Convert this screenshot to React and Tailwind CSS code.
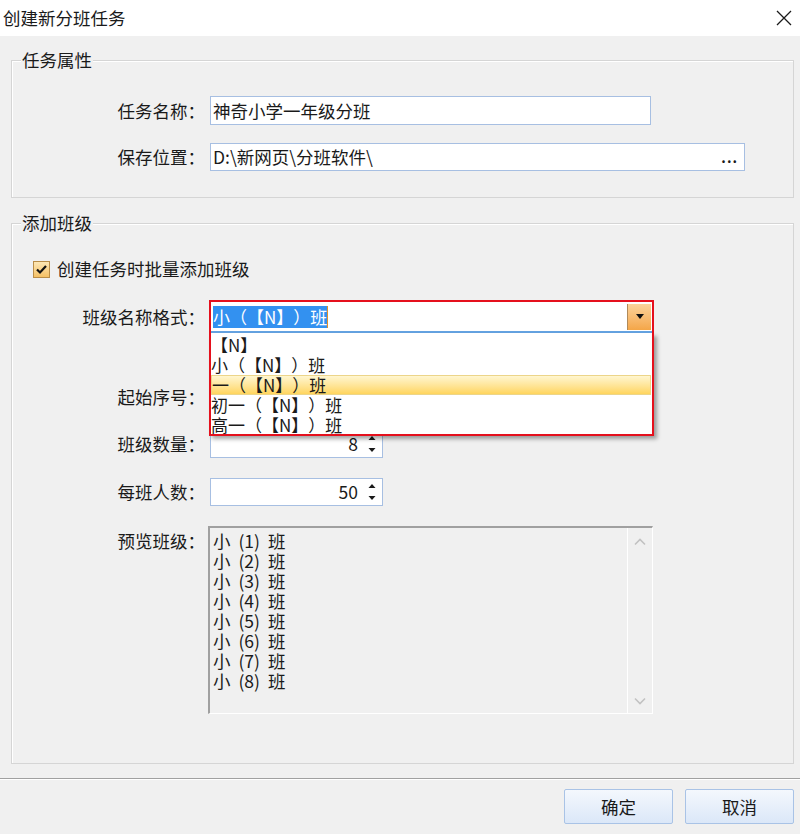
import React from "react";

const FONT = "font-['Noto_Sans_CJK_SC','Microsoft_YaHei',sans-serif]";

const Label = ({ children, className = "" }) => (
  <div className={`w-[193px] shrink-0 text-right leading-[20px] ${className}`}>{children}</div>
);

const TextBox = ({ value, width, height = "h-[28px]", children }) => (
  <div className={`${width} ${height} ml-[5px] flex items-center border border-[#a7bfe2] bg-white pl-[2px]`}>
    <span className="flex-1 leading-[20px] whitespace-nowrap">{value}</span>
    {children}
  </div>
);

const SpinBox = ({ value }) => (
  <div className="w-[173px] h-[28px] ml-[5px] flex items-center justify-end border border-[#a7bfe2] bg-white">
    <span className="leading-[20px]">{value}</span>
    <svg width="8" height="18" viewBox="0 0 8 18" className="ml-[10px] mr-[6px]">
      <path d="M0.5 5 L4 1 L7.5 5 Z" fill="#1a1a1a" />
      <path d="M0.5 13 L4 17 L7.5 13 Z" fill="#1a1a1a" />
    </svg>
  </div>
);

const Group = ({ title, className = "", children }) => (
  <fieldset
    className={`ml-[11px] w-[783px] border border-[#d5d5d5] shadow-[inset_1px_1px_0_#ffffff] ${className}`}
  >
    <legend className="ml-[9px] px-[1px] leading-[20px] bg-[#f0f0f0]">{title}</legend>
    {children}
  </fieldset>
);

const formats = ["【N】", "小（【N】）班", "一（【N】）班", "初一（【N】）班", "高一（【N】）班"];

export default function App() {
  return (
    <div
      className={`w-[800px] h-[834px] bg-[#f0f0f0] text-[17.5px] text-[#1a1a1a] flex flex-col overflow-hidden [text-spacing-trim:space-all] ${FONT}`}
    >
      {/* title bar */}
      <div className="h-[36px] bg-white flex items-center justify-between shrink-0">
        <span className="ml-[3px] leading-[20px]">创建新分班任务</span>
        <svg width="16" height="16" viewBox="0 0 16 16" className="mr-[8px]">
          <path d="M1 1 L15 15 M15 1 L1 15" stroke="#1a1a1a" strokeWidth="1.3" />
        </svg>
      </div>

      <Group title="任务属性" className="mt-[14px] pb-[26px]">
        <div className="flex items-center mt-[26px]">
          <Label>任务名称：</Label>
          <TextBox value="神奇小学一年级分班" width="w-[441px]" height="h-[29px]" />
        </div>
        <div className="flex items-center mt-[18px]">
          <Label>保存位置：</Label>
          <TextBox value="D:\新网页\分班软件\" width="w-[535px]">
            <span className="mr-[6px] font-bold leading-[20px] text-[14px] tracking-[1px]">...</span>
          </TextBox>
        </div>
      </Group>

      <Group title="添加班级" className="mt-[15px] pb-[49px]">
        <div className="flex items-center mt-[26px] ml-[21px] h-[20px]">
          <div className="w-[17px] h-[17px] border border-[#b98d48] bg-gradient-to-b from-[#fde7b4] to-[#f4c064] flex items-center justify-center">
            <svg width="13" height="13" viewBox="0 0 13 13">
              <path d="M2 6.5 L5 9.5 L11 3" stroke="#111" strokeWidth="2.2" fill="none" />
            </svg>
          </div>
          <span className="ml-[7px] leading-[20px]">创建任务时批量添加班级</span>
        </div>

        <div className="flex items-center mt-[21px]">
          <Label>班级名称格式：</Label>
          <div className="relative ml-[4px] w-[445px] z-10 text-[17px]">
            <div className="h-[33px] border-2 border-b-0 border-[#e5101d] bg-white">
              <div className="h-full flex items-center border-b-2 border-[#65a3e2] pl-[2px] pr-[1px]">
                <span className="bg-[#3391f0] text-white leading-[22px] whitespace-nowrap">小（【N】）班</span>
                <span className="w-[1px] h-[22px] bg-[#e0902a]" />
                <div className="flex-1" />
                <div className="w-[24px] h-[26px] border-l border-[#b08a5a] bg-gradient-to-b from-[#fbd39a] to-[#f4a647] flex items-center justify-center">
                  <svg width="8" height="5" viewBox="0 0 8 5">
                    <path d="M0 0 L8 0 L4 5 Z" fill="#111" />
                  </svg>
                </div>
              </div>
            </div>
            <div className="absolute left-0 top-full w-full h-[103px] border-2 border-t-0 border-[#e5101d] bg-white pt-[2px] shadow-[3px_3px_4px_rgba(0,0,0,0.35)]">
              <div className="h-[99px] overflow-hidden">
                {formats.map((f, i) => (
                  <div
                    key={f}
                    className={`h-[20px] whitespace-nowrap mr-[1px] ${
                      i === 2
                        ? "bg-gradient-to-b from-[#fff6cf] to-[#ffd55c] border border-[#ecd58a] leading-[18px]"
                        : "leading-[20px]"
                    }`}
                  >
                    {f}
                  </div>
                ))}
              </div>
            </div>
          </div>
        </div>

        <div className="flex items-center mt-[50px]">
          <Label>起始序号：</Label>
          <SpinBox value="1" />
        </div>
        <div className="flex items-center mt-[19px]">
          <Label>班级数量：</Label>
          <SpinBox value="8" />
        </div>
        <div className="flex items-center mt-[20px]">
          <Label>每班人数：</Label>
          <SpinBox value="50" />
        </div>

        <div className="flex items-start mt-[20px]">
          <Label className="mt-[5px]">预览班级：</Label>
          <div className="ml-[3px] w-[445px] h-[188px] flex border-t-2 border-l-2 border-t-[#a0a0a0] border-l-[#a0a0a0] border-r border-b border-r-white border-b-white bg-[#f0f0f0]">
            <div className="flex-1 pl-[3px] pt-[3px]">
              {[1, 2, 3, 4, 5, 6, 7, 8].map((n) => (
                <div key={n} className="leading-[20px] whitespace-nowrap [word-spacing:4px]">
                  小 ({n}) 班
                </div>
              ))}
            </div>
            <div className="w-[25px] border-l border-white flex flex-col items-center justify-between pt-[10px] pb-[8px]">
              <svg width="12" height="8" viewBox="0 0 12 8">
                <path d="M1 6.5 L6 1.5 L11 6.5" stroke="#c2c2c2" strokeWidth="1.6" fill="none" />
              </svg>
              <svg width="12" height="8" viewBox="0 0 12 8">
                <path d="M1 1.5 L6 6.5 L11 1.5" stroke="#c2c2c2" strokeWidth="1.6" fill="none" />
              </svg>
            </div>
          </div>
        </div>
      </Group>

      {/* footer */}
      <div className="mt-[14px] border-t border-[#a0a0a0] border-b border-b-white" />
      <div className="flex justify-end gap-[12px] mt-[9px] mr-[6px]">
        <button className="w-[109px] h-[35px] rounded-[2px] border border-[#a9c3e6] bg-gradient-to-b from-[#f4f8fd] to-[#dbe7f8] leading-[20px]">
          确定
        </button>
        <button className="w-[109px] h-[35px] rounded-[2px] border border-[#a9c3e6] bg-gradient-to-b from-[#f4f8fd] to-[#dbe7f8] leading-[20px]">
          取消
        </button>
      </div>
    </div>
  );
}
